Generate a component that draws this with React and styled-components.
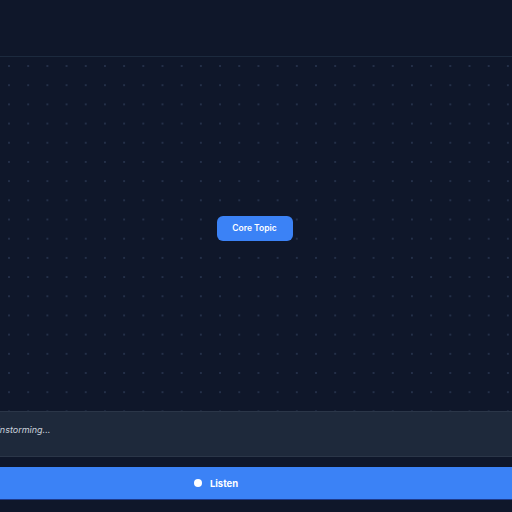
import React from 'react';
import styled, { createGlobalStyle } from 'styled-components';

const Global = createGlobalStyle`
    html, body {
        margin: 0;
        padding: 0;
        background: #0f172a;
        font-family: Inter, "Liberation Sans", sans-serif;
    }
    #root {
        height: 512px;
    }
`;

const Page = styled.div`
    width: 512px;
    height: 512px;
    display: flex;
    flex-direction: column;
    background: #0f172a;
    overflow: hidden;
`;

const Header = styled.div`
    height: 56px;
    flex-shrink: 0;
    border-bottom: 1px solid #1c2a3e;
`;

const Canvas = styled.div`
    flex: 1;
    display: flex;
    align-items: center;
    justify-content: center;
    background-color: #0f172a;
    background-image: radial-gradient(circle, #243049 0.9px, transparent 1.1px);
    background-size: 19.2px 19.2px;
    background-position: -0.6px -0.6px;
`;

const Node = styled.div`
    width: 76px;
    height: 25px;
    margin: 0 3px 12px 0;
    border-radius: 6px;
    background: #3b82f6;
    color: #fff;
    font-size: 8.5px;
    font-weight: 600;
    display: flex;
    align-items: center;
    justify-content: center;
`;

const Footer = styled.div`
    flex-shrink: 0;
    margin-left: -80px;
    display: flex;
    flex-direction: column;
    padding-bottom: 12px;
`;

const Transcript = styled.div`
    height: 46px;
    box-sizing: border-box;
    background: #1e293b;
    border-top: 1px solid #2b3648;
    border-bottom: 1px solid #2b3648;
    padding: 12px 0 0 63px;
    font-size: 9px;
    font-style: italic;
    color: #ccd3dd;
`;

const ListenButton = styled.button`
    margin-top: 10px;
    height: 33px;
    border: none;
    border-bottom: 1px solid #1e3a8a;
    background: #3b82f6;
    color: #fff;
    font-family: inherit;
    font-size: 9.5px;
    font-weight: 700;
    display: flex;
    align-items: center;
    justify-content: center;
    gap: 8px;
    padding: 0;
`;

const Dot = styled.span`
    width: 8px;
    height: 8px;
    border-radius: 50%;
    background: #fff;
`;

const App = () => {
    return (
        <Page>
            <Global />
            <Header />
            <Canvas>
                <Node>Core Topic</Node>
            </Canvas>
            <Footer>
                <Transcript>Brainstorming...</Transcript>
                <ListenButton>
                    <Dot />
                    Listen
                </ListenButton>
            </Footer>
        </Page>
    );
};

export default App;
